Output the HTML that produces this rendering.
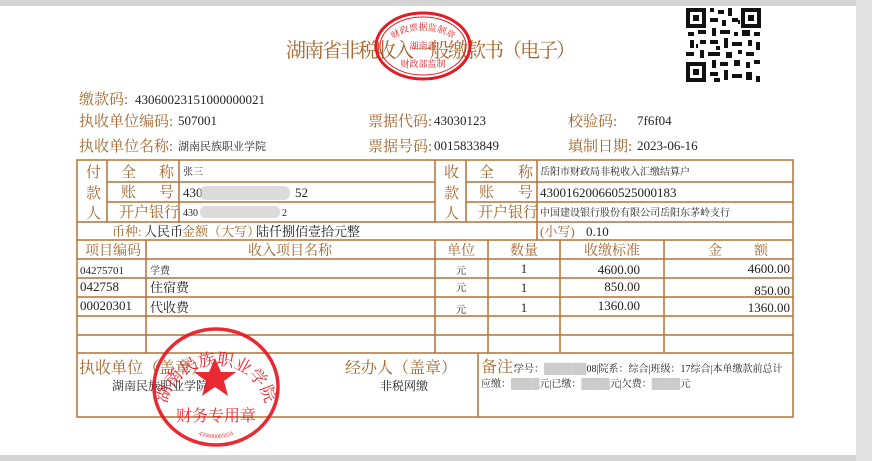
<!DOCTYPE html>
<html><head><meta charset="utf-8"><style>
body{margin:0;width:872px;height:461px;overflow:hidden;background:#d4d4d4;}
svg{display:block}
text{font-family:"Liberation Serif","Noto Serif CJK SC",serif;}
.l{fill:#a5652b;font-size:15px}
.v{fill:#222;font-size:13px}
.s{fill:#222;font-size:10px}
</style></head><body>
<svg width="872" height="461" xmlns="http://www.w3.org/2000/svg">
<defs>
<path id="arc1" d="M166 412 A50 47 0 1 1 266 412"/>
<path id="arc2" d="M385 55 A38 25 0 1 1 461 55"/>
<path id="arc3" d="M180 418 A40 36 0 0 0 252 418"/>
</defs>
<rect x="0" y="6" width="856" height="449" fill="#fff"/>
<rect x="856" y="0" width="16" height="461" fill="#e2e2e2"/>
<text x="286" y="57" class="l" style="font-size:20px" textLength="290">湖南省非税收入一般缴款书（电子）</text>
<g fill="#e31b23">
<ellipse cx="423" cy="46" rx="47" ry="33" fill="none" stroke="#e31b23" stroke-width="3"/>
<ellipse cx="423" cy="46" rx="43" ry="29" fill="none" stroke="#e31b23" stroke-width="1"/>
<text style="font-size:9px"><textPath href="#arc2" startOffset="50%" text-anchor="middle">财政票据监制章</textPath></text>
<text x="423" y="49" text-anchor="middle" style="font-size:9px">湖南省</text>
<text x="423" y="67" text-anchor="middle" style="font-size:9px">财政部监制</text>
</g>
<g fill="#111">
<rect x="686" y="8" width="75" height="74" fill="#fff"/>
<rect x="686" y="8" width="20" height="20"/><rect x="690" y="12" width="12" height="12" fill="#fff"/><rect x="693" y="15" width="6" height="6"/>
<rect x="741" y="8" width="20" height="20"/><rect x="745" y="12" width="12" height="12" fill="#fff"/><rect x="748" y="15" width="6" height="6"/>
<rect x="686" y="62" width="20" height="20"/><rect x="690" y="66" width="12" height="12" fill="#fff"/><rect x="693" y="69" width="6" height="6"/>
<path d="M710 8h4v4h-4zM718 10h6v4h-6zM728 8h4v8h-4zM710 18h8v4h-8zM722 20h4v6h-4zM732 18h6v4h-6zM688 32h6v4h-6zM698 30h8v4h-8zM712 28h4v8h-4zM720 30h10v4h-10zM734 32h4v4h-4zM742 30h8v6h-8zM754 32h6v4h-6zM690 40h4v8h-4zM700 40h6v4h-6zM710 40h8v4h-8zM724 38h4v10h-4zM732 42h10v4h-10zM748 40h4v6h-4zM756 42h4v8h-4zM686 52h8v4h-8zM700 50h4v8h-4zM708 52h12v4h-12zM726 52h6v6h-6zM738 50h4v4h-4zM746 52h8v4h-8zM712 60h4v8h-4zM720 62h8v4h-8zM734 60h6v6h-6zM746 62h4v6h-4zM754 60h6v4h-6zM710 72h8v4h-8zM724 70h4v10h-4zM732 74h10v4h-10zM746 72h6v8h-6zM756 76h4v6h-4zM714 78h6v4h-6zM716 46h4v4h-4zM740 20h-2v4h2zM696 44h2v4h-2z"/>
</g>
<text x="79" y="104" class="l">缴款码:</text><text x="135" y="104" class="v">43060023151000000021</text>
<text x="79" y="126" class="l">执收单位编码:</text><text x="178" y="125" class="v">507001</text>
<text x="368" y="126" class="l">票据代码:</text><text x="434" y="125" class="v">43030123</text>
<text x="568" y="126" class="l">校验码:</text><text x="637" y="125" class="v">7f6f04</text>
<text x="79" y="151" class="l">执收单位名称:</text><text x="178" y="150" class="s" style="font-size:11px">湖南民族职业学院</text>
<text x="368" y="151" class="l">票据号码:</text><text x="434" y="150" class="v">0015833849</text>
<text x="568" y="151" class="l">填制日期:</text><text x="637" y="150" class="v">2023-06-16</text>
<g stroke="#b37233" stroke-width="1.5" fill="none">
<rect x="77" y="160" width="716" height="257"/>
<path d="M107 160V222M179 160V222M435 160V222M466 160V222M537 160V222M537 222V240"/>
<path d="M107 182H435M107 202H435M466 182H793M466 202H793M77 222H793M77 240H793M77 259H793M77 278H793M77 297H793M77 316H793M77 335H793M77 353H793"/>
<path d="M146 240V353M435 240V353M488 240V353M560 240V353M664 240V353M478 353V417"/>
</g>
<text x="86" y="177" class="l">付</text><text x="86" y="198" class="l">款</text><text x="86" y="218" class="l">人</text>
<text x="444" y="177" class="l">收</text><text x="444" y="198" class="l">款</text><text x="444" y="218" class="l">人</text>
<text x="121" y="177" class="l">全</text><text x="159" y="177" class="l">称</text>
<text x="121" y="197" class="l">账</text><text x="159" y="197" class="l">号</text>
<text x="119" y="217" class="l">开户银行</text>
<text x="479" y="177" class="l">全</text><text x="518" y="177" class="l">称</text>
<text x="479" y="197" class="l">账</text><text x="518" y="197" class="l">号</text>
<text x="478" y="217" class="l">开户银行</text>
<text x="183" y="175" class="s">张三</text>
<text x="183" y="197" class="v">430</text><rect x="200" y="186" width="90" height="14" rx="6" fill="#ccc" opacity=".7"/><text x="295" y="197" class="v">52</text>
<text x="183" y="216" class="s">430</text><rect x="200" y="206" width="80" height="12" rx="5" fill="#ccc" opacity=".7"/><text x="282" y="216" class="s">2</text>
<text x="540" y="175" class="s">岳阳市财政局非税收入汇缴结算户</text>
<text x="540" y="197" class="v">430016200660525000183</text>
<text x="540" y="216" class="s">中国建设银行股份有限公司岳阳东茅岭支行</text>
<text x="112" y="236" class="l" style="font-size:13px">币种:</text><text x="144" y="236" class="v">人民币</text>
<text x="182" y="236" class="l" style="font-size:13px">金额（大写）</text><text x="256" y="236" class="v">陆仟捌佰壹拾元整</text>
<text x="540" y="236" class="l" style="font-size:13px">(小写)</text><text x="586" y="236" class="v">0.10</text>
<text x="85" y="255" class="l" style="font-size:14px">项目编码</text>
<text x="290" y="255" text-anchor="middle" class="l" style="font-size:14px">收入项目名称</text>
<text x="461" y="255" text-anchor="middle" class="l" style="font-size:14px">单位</text>
<text x="524" y="255" text-anchor="middle" class="l" style="font-size:14px">数量</text>
<text x="612" y="255" text-anchor="middle" class="l" style="font-size:14px">收缴标准</text>
<text x="708" y="255" class="l" style="font-size:14px">金</text><text x="754" y="255" class="l" style="font-size:14px">额</text>
<text x="80" y="274" class="s" style="font-size:11px">04275701</text><text x="150" y="274" class="s">学费</text>
<text x="461" y="274" text-anchor="middle" class="s">元</text><text x="524" y="273" text-anchor="middle" class="v">1</text>
<text x="640" y="274" text-anchor="end" class="v">4600.00</text><text x="790" y="273" text-anchor="end" class="v">4600.00</text>
<text x="80" y="291" class="v">042758</text><text x="150" y="292" class="v">住宿费</text>
<text x="461" y="291" text-anchor="middle" class="s">元</text><text x="524" y="292" text-anchor="middle" class="v">1</text>
<text x="640" y="291" text-anchor="end" class="v">850.00</text><text x="790" y="295" text-anchor="end" class="v">850.00</text>
<text x="80" y="310" class="v">00020301</text><text x="150" y="312" class="v">代收费</text>
<text x="461" y="313" text-anchor="middle" class="s">元</text><text x="524" y="312" text-anchor="middle" class="v">1</text>
<text x="640" y="310" text-anchor="end" class="v">1360.00</text><text x="790" y="312" text-anchor="end" class="v">1360.00</text>
<text x="79" y="373" class="l" style="font-size:16px">执收单位（盖章）</text>
<text x="112" y="390" class="s" style="font-size:12px">湖南民族职业学院</text>
<text x="345" y="373" class="l" style="font-size:16px">经办人（盖章）</text>
<text x="380" y="390" class="s" style="font-size:12px">非税网缴</text>
<text x="481" y="372" class="l" style="font-size:16px">备注:</text>
<text x="514" y="372" class="s">学号：<tspan fill="#ccc">██████</tspan>08|院系：综合|班级：17综合|本单缴款前总计</text>
<text x="481" y="387" class="s">应缴：<tspan fill="#ccc">████</tspan>元|已缴：<tspan fill="#ccc">████</tspan>元|欠费：<tspan fill="#ccc">████</tspan>元</text>
<g fill="#e8141c" opacity=".9">
<ellipse cx="216" cy="387" rx="62" ry="58" fill="none" stroke="#e8141c" stroke-width="3.5"/>
<polygon points="215,358 221,372 236,372 224,381 228,396 215,387 202,396 206,381 194,372 209,372"/>
<text x="216" y="421" text-anchor="middle" style="font-size:16px">财务专用章</text>
<text style="font-size:17px"><textPath href="#arc1" startOffset="50%" text-anchor="middle">湖南民族职业学院</textPath></text>
<text style="font-size:6px"><textPath href="#arc3" startOffset="50%" text-anchor="middle">430600005024</textPath></text>
</g>
</svg>
</body></html>
